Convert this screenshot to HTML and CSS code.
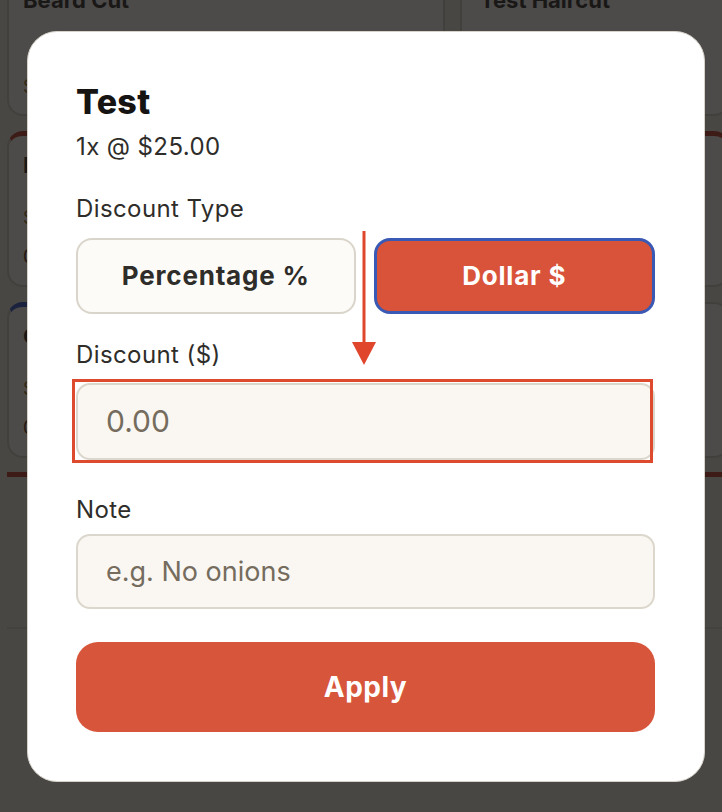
FILE: index.html
```html
<!DOCTYPE html>
<html lang="en">
<head>
    <meta charset="UTF-8">
    <meta name="viewport" content="width=device-width, initial-scale=1.0">
    <title>Item discount</title>
    <link rel="stylesheet" href="styles.css">
</head>
<body>
    <div class="page">
        <div class="grid">
            <div class="card first">
                <div class="card-name">Beard Cut</div>
                <div class="card-price">$20.00</div>
            </div>
            <div class="card first">
                <div class="card-name">Test Haircut</div>
            </div>
            <div class="card red">
                <div class="card-name">Fade</div>
                <div class="card-price">$30.00</div>
                <div class="card-qty">0</div>
            </div>
            <div class="card red"></div>
            <div class="card blue">
                <div class="card-name">Color</div>
                <div class="card-price">$45.00</div>
                <div class="card-qty">0</div>
            </div>
            <div class="card"></div>
        </div>
        <div class="cart-bar"></div>
        <div class="footer"></div>
    </div>

    <div class="overlay">
        <div class="modal">
            <svg class="arrow" width="26" height="136" viewBox="0 0 26 136">
                <rect x="11.5" y="0" width="3" height="112" fill="#e0462c"/>
                <polygon points="1,111 25,111 13,134" fill="#e0462c"/>
            </svg>

            <h2 class="modal-title">Test</h2>
            <div class="modal-sub">1x @ $25.00</div>

            <label class="field-label type-label">Discount Type</label>
            <div class="type-switch">
                <button class="type-btn">Percentage %</button>
                <button class="type-btn active">Dollar $</button>
            </div>

            <label class="field-label" for="discount">Discount ($)</label>
            <div class="marked">
                <input class="field-input" type="text" id="discount" placeholder="0.00">
            </div>

            <label class="field-label note-label" for="note">Note</label>
            <input class="field-input note-input" type="text" id="note" placeholder="e.g. No onions">

            <button class="apply-btn">Apply</button>
        </div>
    </div>
</body>
</html>
```

FILE: styles.css
```css
* {
    box-sizing: border-box;
}
body {
    margin: 0;
    font-family: Inter, "Noto Sans", Arial, sans-serif;
    background: #efece5;
    color: #2e2d2a;
    height: 812px;
    overflow: hidden;
}

/* page behind the dialog */
.page {
    padding: 0 0 0 7px;
}
.grid {
    display: grid;
    grid-template-columns: 438px 270px;
    column-gap: 15px;
    row-gap: 15px;
}
.card {
    height: 156px;
    background: #fdfcf8;
    border: 2px solid #d6d2c8;
    border-radius: 16px;
    padding: 16px 14px;
}
.card.first {
    margin-top: -40px;
    padding-top: 25px;
}
.card.first:nth-child(2) {
    padding-left: 18px;
}
.card.red {
    border-top: 5px solid #c0392b;
}
.card.blue {
    border-top: 5px solid #2f55c9;
}
.card-name {
    font-size: 22px;
    line-height: 27px;
    font-weight: 700;
}
.card-price {
    margin-top: 28px;
    font-size: 18px;
    color: #8a6a2a;
}
.card.first .card-price {
    margin-top: 62px;
}
.card-qty {
    margin-top: 18px;
    font-size: 18px;
    color: #5a2a10;
}
.cart-bar {
    margin-top: 14px;
    height: 5px;
    background: #c0392b;
}
.footer {
    margin-top: 150px;
    border-top: 2px solid #dcd8cf;
    height: 200px;
}

/* dialog */
.overlay {
    position: fixed;
    inset: 0;
    background: rgba(20, 19, 17, 0.76);
    display: flex;
    align-items: center;
    padding-left: 27px;
}
.modal {
    position: relative;
    width: 678px;
    height: 751px;
    background: #fff;
    border: 1px solid #d6d2c9;
    border-radius: 30px;
    padding: 50px 49px 0 48px;
}
.modal-title {
    margin: 0;
    font-size: 34px;
    line-height: 40px;
    font-weight: 800;
    letter-spacing: 0.3px;
    color: #151412;
}
.modal-sub {
    margin-top: 10px;
    font-size: 24px;
    line-height: 30px;
    letter-spacing: 0.4px;
    color: #2e2d2a;
}
.field-label {
    display: block;
    font-size: 24px;
    line-height: 30px;
    letter-spacing: 0.4px;
    color: #2e2d2a;
    margin-top: 26px;
    margin-bottom: 13px;
}
.type-label {
    margin-top: 32px;
    margin-bottom: 14px;
}
.type-switch {
    display: flex;
    gap: 18px;
}
.type-btn {
    flex: 1;
    height: 76px;
    border: 2px solid #dad5cb;
    border-radius: 16px;
    background: #fcfbf7;
    font-family: inherit;
    font-size: 26px;
    font-weight: 700;
    letter-spacing: 0.8px;
    color: #2e2d2a;
}
.type-btn.active {
    background: #d9533a;
    border: 3px solid #3a59b4;
    color: #fff;
}
.field-input {
    display: block;
    width: 100%;
    height: 77px;
    border: 2px solid #dcd7cc;
    border-radius: 14px;
    background: #faf7f2;
    padding: 0 28px;
    font-family: inherit;
    font-size: 30px;
    color: #2e2d2a;
}
.field-input::placeholder {
    color: #756c5e;
}
.marked {
    position: relative;
}
.marked::after {
    content: "";
    position: absolute;
    left: -4px;
    top: -4px;
    right: 2px;
    bottom: -3px;
    border: 3px solid #de4a2e;
    pointer-events: none;
}
.note-label {
    margin-top: 35px;
    margin-bottom: 9px;
}
.note-input {
    height: 75px;
    font-size: 27px;
}
.arrow {
    position: absolute;
    left: 323px;
    top: 199px;
}
.apply-btn {
    display: block;
    width: 100%;
    height: 90px;
    margin-top: 33px;
    border: none;
    border-radius: 22px;
    background: #d7553a;
    font-family: inherit;
    font-size: 28px;
    font-weight: 700;
    letter-spacing: 0.5px;
    color: #fff;
}
```
